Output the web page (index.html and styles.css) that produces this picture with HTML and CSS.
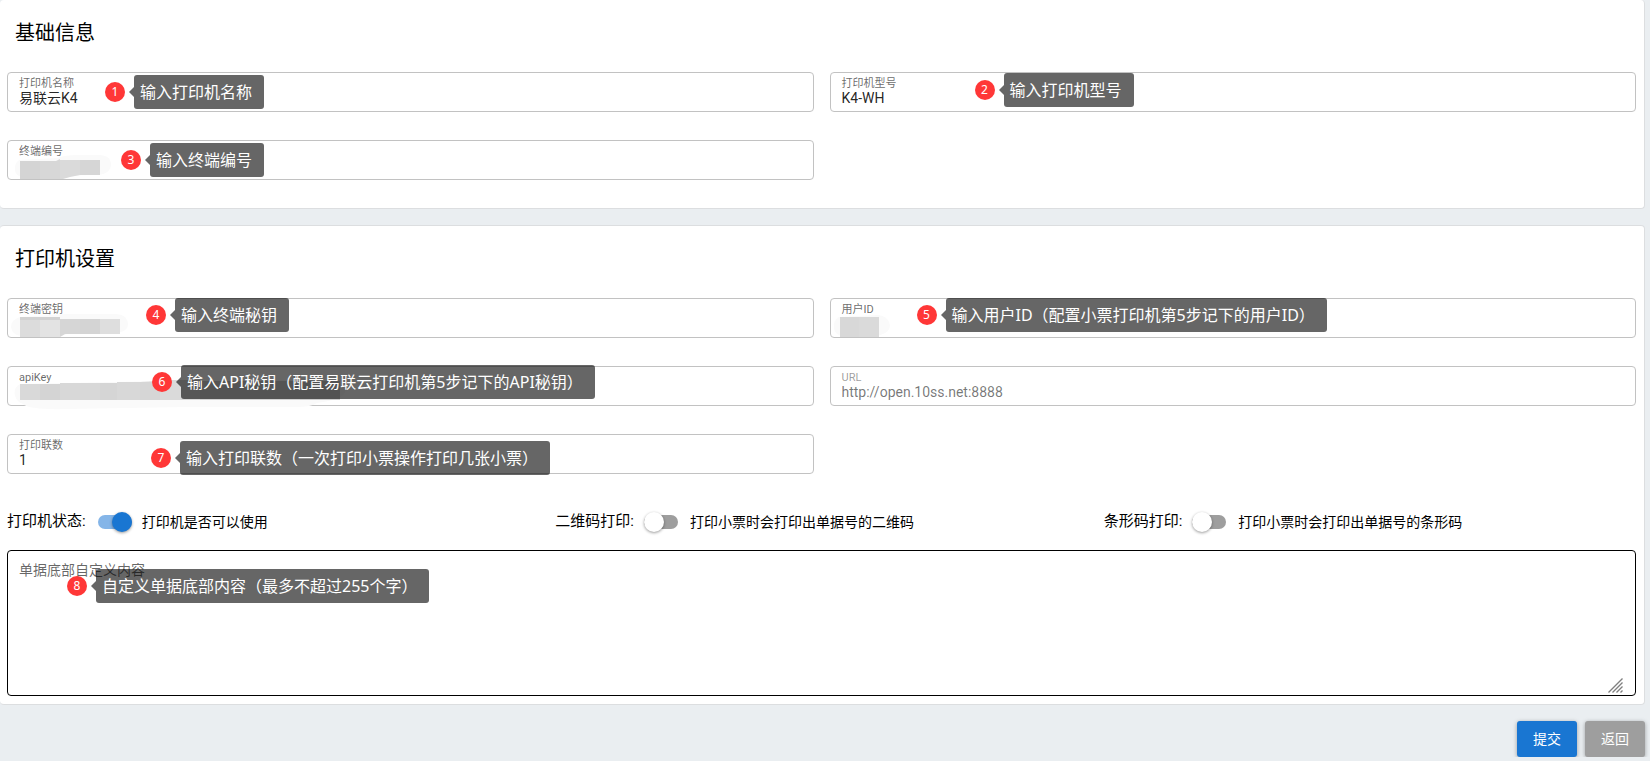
FILE: index.html
```html
<!DOCTYPE html>
<html lang="zh-CN">
<head>
<meta charset="utf-8">
<meta name="viewport" content="width=device-width, initial-scale=1">
<title>打印机设置</title>
<link rel="stylesheet" href="styles.css">
</head>
<body>
<form class="page">
  <section class="card card-first">
    <h2 class="card-title">基础信息</h2>
    <div class="fields">
      <div class="field">
        <label class="field-label" for="name">打印机名称</label>
        <input class="field-input" id="name" type="text" value="易联云K4">
        <div class="tip tip-name"><span class="tip-number">1</span><span class="tip-text">输入打印机名称</span></div>
      </div>
      <div class="field">
        <label class="field-label" for="model">打印机型号</label>
        <input class="field-input" id="model" type="text" value="K4-WH">
        <div class="tip tip-model"><span class="tip-number">2</span><span class="tip-text">输入打印机型号</span></div>
      </div>
      <div class="field">
        <label class="field-label" for="terminal">终端编号</label>
        <input class="field-input" id="terminal" type="text">
        <svg class="mask" width="360" height="46" viewBox="0 0 360 46" aria-hidden="true">
          <path fill="#fafafa" d="M12 20Q7 24 8 31Q9 36 16 37H60Q68 35 84 35Q103 36 104 25Q104 15 92 15H70Q58 15 50 18Z"/>
          <path fill="#d4d4d4" d="M13 21H33V39H13Z"/><path fill="#d7d7d7" d="M33 21H49L53 19V39H33Z"/>
          <path fill="#dadada" d="M53 20H73V35L63 37L56 39H53Z"/><path fill="#d6d6d6" d="M73 20H93V35H73Z"/>
        </svg>
        <div class="tip tip-terminal"><span class="tip-number">3</span><span class="tip-text">输入终端编号</span></div>
      </div>
    </div>
  </section>

  <section class="card">
    <h2 class="card-title">打印机设置</h2>
    <div class="fields">
      <div class="field">
        <label class="field-label" for="secret">终端密钥</label>
        <input class="field-input" id="secret" type="text">
        <svg class="mask" width="360" height="46" viewBox="0 0 360 46" aria-hidden="true">
          <path fill="#fafafa" d="M13 19Q4 22 4 29Q5 37 14 38H55L63 35H105Q121 35 121 26Q120 16 108 16H60Z"/>
          <path fill="#dcdcdc" d="M13 19H33V39H13Z"/><path fill="#e3e3e3" d="M33 19H53V39H33Z"/><path fill="#d2d2d2" d="M13 19H53V22H13Z"/>
          <path fill="#d6d6d6" d="M53 21H93V36H58L53 39Z"/><path fill="#d4d4d4" d="M73 21H93V36H73Z"/><path fill="#dedede" d="M93 21H113V36H93Z"/>
        </svg>
        <div class="tip tip-secret"><span class="tip-number">4</span><span class="tip-text">输入终端秘钥</span></div>
      </div>
      <div class="field">
        <label class="field-label" for="user">用户ID</label>
        <input class="field-input" id="user" type="text">
        <svg class="mask" width="360" height="46" viewBox="0 0 360 46" aria-hidden="true">
          <path fill="#fafafa" d="M9 19Q3 22 4 31Q6 38 13 38H45Q60 36 60 27Q58 18 48 17Z"/>
          <path fill="#d8d8d8" d="M10 19H29V39H10Z"/><path fill="#dadada" d="M29 19H49V39H29Z"/>
        </svg>
        <div class="tip tip-user"><span class="tip-number">5</span><span class="tip-text">输入用户ID（配置小票打印机第5步记下的用户ID）</span></div>
      </div>
      <div class="field">
        <label class="field-label" for="apikey">apiKey</label>
        <input class="field-input" id="apikey" type="text">
        <svg class="mask" width="360" height="46" viewBox="0 0 360 46" aria-hidden="true">
          <path fill="#fafafa" d="M13 18Q6 22 8 30Q10 36 16 38Q22 44 60 43L180 41H290Q304 41 310 37Q338 33 338 25Q336 15 320 14L150 15Z"/>
          <path fill="#d9d9d9" d="M13 18H33V34H13Z"/><path fill="#d4d4d4" d="M33 18H57V34H33Z"/><path fill="#d8d8d8" d="M53 17H93V34H53Z"/>
          <path fill="#d5d5d5" d="M93 17H113V34H93Z"/><path fill="#d8d8d8" d="M110 16H133V34H110Z"/><path fill="#d6d6d6" d="M133 16L153 15V34H133Z"/>
          <path fill="#dadada" d="M153 14H193V34H153Z"/><path fill="#d2d2d2" d="M193 15H293V34H193Z"/><path fill="#cccccc" d="M293 15H333V34H293Z"/>
        </svg>
        <div class="tip tip-apikey"><span class="tip-number">6</span><span class="tip-text">输入API秘钥（配置易联云打印机第5步记下的API秘钥）</span></div>
      </div>
      <div class="field field-disabled">
        <label class="field-label" for="url">URL</label>
        <input class="field-input" id="url" type="text" value="http://open.10ss.net:8888" disabled>
      </div>
      <div class="field">
        <label class="field-label" for="copies">打印联数</label>
        <input class="field-input" id="copies" type="text" value="1">
        <div class="tip tip-copies"><span class="tip-number">7</span><span class="tip-text">输入打印联数（一次打印小票操作打印几张小票）</span></div>
      </div>
    </div>

    <div class="switches">
      <div class="switch-row">
        <span class="switch-name">打印机状态:</span>
        <input class="switch" id="enabled" type="checkbox" role="switch" checked>
        <label class="switch-hint" for="enabled">打印机是否可以使用</label>
      </div>
      <div class="switch-row">
        <span class="switch-name">二维码打印:</span>
        <input class="switch" id="qrcode" type="checkbox" role="switch">
        <label class="switch-hint" for="qrcode">打印小票时会打印出单据号的二维码</label>
      </div>
      <div class="switch-row">
        <span class="switch-name">条形码打印:</span>
        <input class="switch" id="barcode" type="checkbox" role="switch">
        <label class="switch-hint" for="barcode">打印小票时会打印出单据号的条形码</label>
      </div>
    </div>

    <div class="footer-field">
      <label class="footer-label" for="footer">单据底部自定义内容</label>
      <textarea class="footer-input" id="footer"></textarea>
      <svg class="grip" width="15" height="15" viewBox="0 0 15 15" aria-hidden="true">
        <path d="M.5 14.5l14-14M4.500 14.500l10-10M8.500 14.500l6-6M12.500 14.500l2-2" stroke="#808080" stroke-width="1.400" fill="none"/>
      </svg>
      <div class="tip tip-footer"><span class="tip-number">8</span><span class="tip-text">自定义单据底部内容（最多不超过255个字）</span></div>
    </div>
  </section>

  <div class="actions">
    <button class="button button-primary" type="submit">提交</button>
    <button class="button button-plain" type="button">返回</button>
  </div>
</form>
</body>
</html>
```

FILE: styles.css
```css
* { box-sizing: border-box; }

body {
  margin: 0;
  background: #eaeef1;
  color: #000;
  font-family: Roboto, "Noto Sans CJK SC", sans-serif;
  font-size: 14px;
}

.page {
  display: flex;
  flex-direction: column;
  gap: 16px;
  padding-right: 5px;
}

.card {
  padding: 16px 8px 8px 7px;
  background: #fff;
  border: 1px solid #dcdee0;
  border-left: 0;
  border-radius: 4px;
}

.card-first {
  border-top: 0;
  padding-bottom: 28px;
}

.card-title {
  margin: 0 0 22px;
  padding-left: 8px;
  font-size: 20px;
  font-weight: 400;
  line-height: 34px;
}

.fields {
  display: grid;
  grid-template-columns: repeat(2, minmax(0, 1fr));
  gap: 28px 16px;
}

.field {
  position: relative;
  display: flex;
  flex-direction: column;
  height: 40px;
  padding: 4px 11px;
  border: 1px solid #c2c2c2;
  border-radius: 4px;
}

.field-label {
  color: rgba(0, 0, 0, .6);
  font-size: 11px;
  line-height: 13px;
}

.field-input {
  width: 100%;
  height: 17px;
  padding: 0;
  border: 0;
  outline: 0;
  background: transparent;
  color: rgba(0, 0, 0, .87);
  font: inherit;
  line-height: 17px;
}

.field-disabled .field-label { color: rgba(0, 0, 0, .4); }
.field-disabled .field-input { color: rgba(0, 0, 0, .54); }

.mask {
  position: absolute;
  top: -1px;
  left: -1px;
}

/* numbered hints laid over the form */
.tip {
  position: absolute;
  z-index: 1;
  display: flex;
  align-items: center;
  gap: 9px;
  color: #fff;
  font-family: "Noto Sans", "Noto Sans CJK SC", sans-serif;
  white-space: nowrap;
  pointer-events: none;
}

.tip-number {
  width: 20px;
  height: 20px;
  border-radius: 50%;
  background: #ff3737;
  font-size: 12px;
  line-height: 20px;
  text-align: center;
}

.tip-text {
  position: relative;
  height: 34px;
  padding: 0 12px 0 6px;
  border-radius: 3px;
  background: rgba(0, 0, 0, .6);
  font-size: 16px;
  line-height: 34px;
}

.tip-text::before {
  content: "";
  position: absolute;
  top: 12px;
  right: 100%;
  border: 5px solid transparent;
  border-right-color: rgba(0, 0, 0, .6);
  border-left: 0;
}

.tip-name { top: 2px; left: 97px; }
.tip-model { top: 0; left: 144px; }
.tip-terminal { top: 2px; left: 113px; }
.tip-secret { top: -1px; left: 138px; }
.tip-user { top: -1px; left: 86px; }
.tip-apikey { top: -2px; left: 144px; }
.tip-copies { top: 6px; left: 143px; }
.tip-footer { top: 18px; left: 59px; }

.switches {
  display: grid;
  grid-template-columns: repeat(3, minmax(0, 1fr));
  gap: 16px;
  margin: 28px 0 8px;
}

.switch-row {
  display: flex;
  align-items: center;
  height: 40px;
}

.switch-name {
  margin-right: 10px;
  padding-bottom: 2px;
  font-size: 15px;
  line-height: 24px;
}

.switch {
  position: relative;
  flex: none;
  width: 34px;
  height: 20px;
  margin: 0 12px 0 0;
  appearance: none;
}

.switch:checked { margin: 0 10px 0 2px; }

.switch::before {
  content: "";
  position: absolute;
  inset: 3px 0;
  border-radius: 7px;
  background: #9e9e9e;
}

.switch::after {
  content: "";
  position: absolute;
  top: 0;
  left: 0;
  width: 20px;
  height: 20px;
  border-radius: 50%;
  background: #fff;
  box-shadow: 0 1px 3px rgba(0, 0, 0, .4);
}

.switch:checked::before { background: #84b5e8; }
.switch:checked::after { left: auto; right: 0; background: #1976d2; }

.switch-hint { line-height: 24px; }

.footer-field {
  position: relative;
  display: flex;
  flex-direction: column;
  height: 146px;
  padding: 9px 12px 3px 11px;
  border: 1px solid #000;
  border-radius: 4px;
}

.footer-label {
  color: rgba(0, 0, 0, .6);
  line-height: 20px;
}

.footer-input {
  flex: 1;
  width: 100%;
  padding: 0;
  border: 0;
  outline: 0;
  background: transparent;
  font: inherit;
  resize: none;
}

.grip {
  position: absolute;
  right: 12px;
  bottom: 2px;
}

.actions {
  display: flex;
  justify-content: flex-end;
  gap: 8px;
}

.button {
  width: 60px;
  height: 36px;
  padding: 0 0 3px;
  border: 0;
  border-radius: 3px;
  box-shadow: 0 1px 4px rgba(0, 0, 0, .35);
  color: #fff;
  font: inherit;
}

.button-primary { background: #1976d2; }
.button-plain { background: #9e9e9e; }
```
